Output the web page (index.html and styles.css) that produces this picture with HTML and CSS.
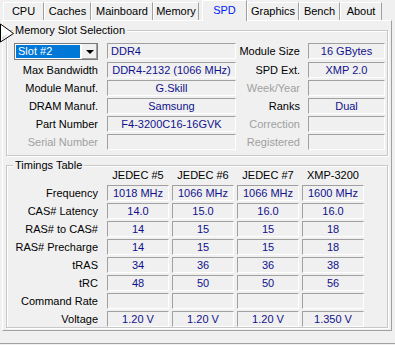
FILE: index.html
```html
<!DOCTYPE html>
<html lang="en">
<head>
    <meta charset="UTF-8">
    <title>CPU-Z SPD</title>
    <link rel="stylesheet" href="styles.css">
</head>
<body>
    <div class="tabs">
        <div class="tab w-cpu">CPU</div>
        <div class="tab w-caches">Caches</div>
        <div class="tab w-mainboard">Mainboard</div>
        <div class="tab w-memory">Memory</div>
        <div class="tab active w-spd">SPD</div>
        <div class="tab w-graphics">Graphics</div>
        <div class="tab w-bench">Bench</div>
        <div class="tab w-about">About</div>
    </div>

    <div class="panel">
        <div class="group slot-group">
            <span class="group-title">Memory Slot Selection</span>

            <div class="slot-grid">
                <div class="combo">
                    <span class="combo-value">Slot #2</span>
                    <span class="combo-btn"><span class="arrow"></span></span>
                </div>
                <div class="field left">DDR4</div>
                <div class="label">Module Size</div>
                <div class="field">16 GBytes</div>

                <div class="label">Max Bandwidth</div>
                <div class="field">DDR4-2132 (1066 MHz)</div>
                <div class="label">SPD Ext.</div>
                <div class="field">XMP 2.0</div>

                <div class="label">Module Manuf.</div>
                <div class="field">G.Skill</div>
                <div class="label off">Week/Year</div>
                <div class="field"></div>

                <div class="label">DRAM Manuf.</div>
                <div class="field">Samsung</div>
                <div class="label">Ranks</div>
                <div class="field">Dual</div>

                <div class="label">Part Number</div>
                <div class="field">F4-3200C16-16GVK</div>
                <div class="label off">Correction</div>
                <div class="field"></div>

                <div class="label off">Serial Number</div>
                <div class="field"></div>
                <div class="label off">Registered</div>
                <div class="field"></div>
            </div>
        </div>

        <div class="group timings-group">
            <span class="group-title">Timings Table</span>

            <div class="timings-grid">
                <div></div>
                <div class="head">JEDEC #5</div>
                <div class="head">JEDEC #6</div>
                <div class="head">JEDEC #7</div>
                <div class="head">XMP-3200</div>

                <div class="label">Frequency</div>
                <div class="field">1018 MHz</div>
                <div class="field">1066 MHz</div>
                <div class="field">1066 MHz</div>
                <div class="field">1600 MHz</div>

                <div class="label">CAS# Latency</div>
                <div class="field">14.0</div>
                <div class="field">15.0</div>
                <div class="field">16.0</div>
                <div class="field">16.0</div>

                <div class="label">RAS# to CAS#</div>
                <div class="field">14</div>
                <div class="field">15</div>
                <div class="field">15</div>
                <div class="field">18</div>

                <div class="label">RAS# Precharge</div>
                <div class="field">14</div>
                <div class="field">15</div>
                <div class="field">15</div>
                <div class="field">18</div>

                <div class="label">tRAS</div>
                <div class="field">34</div>
                <div class="field">36</div>
                <div class="field">36</div>
                <div class="field">38</div>

                <div class="label">tRC</div>
                <div class="field">48</div>
                <div class="field">50</div>
                <div class="field">50</div>
                <div class="field">56</div>

                <div class="label">Command Rate</div>
                <div class="field"></div>
                <div class="field"></div>
                <div class="field"></div>
                <div class="field"></div>

                <div class="label">Voltage</div>
                <div class="field">1.20 V</div>
                <div class="field">1.20 V</div>
                <div class="field">1.20 V</div>
                <div class="field">1.350 V</div>
            </div>
        </div>
    </div>

    <div class="footer"></div>

    <!-- mouse pointer caught in the screenshot -->
    <svg class="cursor" width="16" height="22" viewBox="0 0 16 22">
        <polygon points="0.5,1 13.5,10.5 0.5,19" fill="#fff" stroke="#000" stroke-width="1"/>
        <polygon points="2,14 9,10.5 2,17" fill="#d8d8d8"/>
    </svg>
</body>
</html>
```

FILE: styles.css
```css
* {
    margin: 0;
    padding: 0;
    box-sizing: border-box;
}

body {
    width: 395px;
    height: 345px;
    overflow: hidden;
    background: #f0f0f0;
    font-family: 'Liberation Sans', Arial, sans-serif;
    font-size: 11px;
    line-height: 13px;
    color: #000;
    position: relative;
}

/* tab strip */
.tabs {
    display: flex;
    align-items: flex-end;
    height: 20px;
    padding-left: 3px;
}

.tab {
    height: 18px;
    line-height: 16px;
    text-align: center;
    border-top: 1px solid #fff;
    border-left: 1px solid #fff;
    border-right: 1px solid #a0a0a0;
    background: #f0f0f0;
}

.tab.active {
    height: 21px;
    margin-bottom: -1px;
    margin-left: 3px;
    line-height: 19px;
    color: #0022ee;
    position: relative;
    z-index: 1;
}

.w-cpu { width: 41px; }
.w-caches { width: 47px; }
.w-mainboard { width: 62px; }
.w-memory { width: 46px; }
.w-spd { width: 45px; }
.w-graphics { width: 52px; }
.w-bench { width: 41px; }
.w-about { width: 42px; }

/* tab page */
.panel {
    margin-left: 2px;
    width: 390px;
    height: 311px;
    border-top: 1px solid #fff;
    border-left: 1px solid #fff;
    border-right: 1px solid #a0a0a0;
    border-bottom: 1px solid #a0a0a0;
    padding: 9px 3px 0 3px;
}

.group {
    position: relative;
    border: 1px solid #c8c8c8;
    box-shadow: inset 1px 1px 0 #fff, 1px 1px 0 #fff;
}

.group-title {
    position: absolute;
    top: -7px;
    left: 6px;
    padding: 0 2px;
    background: #f0f0f0;
}

.slot-group {
    height: 126px;
    padding-top: 12px;
}

.timings-group {
    margin-top: 9px;
    height: 163px;
    padding-top: 2px;
}

.slot-grid {
    display: grid;
    grid-template-columns: 100px 129px 72px 77px;
    grid-template-rows: 17px repeat(5, 16px);
    row-gap: 2px;
}

.slot-grid > .label {
    padding-right: 9px;
}

.slot-grid > .label:nth-child(4n+3) {
    padding-right: 8px;
}

.slot-grid > :nth-child(-n+4) {
    margin-bottom: 2px;
}

.slot-grid > .field:nth-child(2),
.slot-grid > .field:nth-child(4) {
    height: 16px;
}

.timings-grid {
    display: grid;
    grid-template-columns: 97px repeat(4, 62px);
    grid-template-rows: 15px repeat(8, 16px);
    column-gap: 3px;
    row-gap: 2px;
}

.timings-grid > .label {
    padding-right: 6px;
}

.label {
    text-align: right;
    line-height: 16px;
    white-space: nowrap;
}

.label.off {
    color: #a0a0a0;
}

.head {
    text-align: center;
    line-height: 15px;
}

.field {
    height: 16px;
    line-height: 14px;
    text-align: center;
    color: #10108c;
    border-top: 1px solid #a0a0a0;
    border-left: 1px solid #a0a0a0;
    border-right: 1px solid #fff;
    border-bottom: 1px solid #fff;
    white-space: nowrap;
}

.field.left {
    text-align: left;
    padding-left: 3px;
}

/* slot combobox */
.combo {
    display: flex;
    margin-left: 7px;
    margin-right: 9px;
    height: 17px;
    border: 1px solid #7a7a7a;
    background: #fff;
}

.combo-value {
    flex: 1;
    margin: 1px;
    padding-left: 2px;
    background: #0078d7;
    color: #fff;
    line-height: 13px;
}

.combo-btn {
    width: 16px;
    display: flex;
    align-items: center;
    justify-content: center;
    background: #f0f0f0;
    border-left: 1px solid #fff;
    box-shadow: inset -1px -1px 0 #a0a0a0;
}

.arrow {
    width: 0;
    height: 0;
    border-left: 4px solid transparent;
    border-right: 4px solid transparent;
    border-top: 4px solid #000;
}

.footer {
    margin-top: 12px;
    border-top: 1px solid #a0a0a0;
    height: 2px;
}

.cursor {
    position: absolute;
    left: 0;
    top: 23px;
}
```
